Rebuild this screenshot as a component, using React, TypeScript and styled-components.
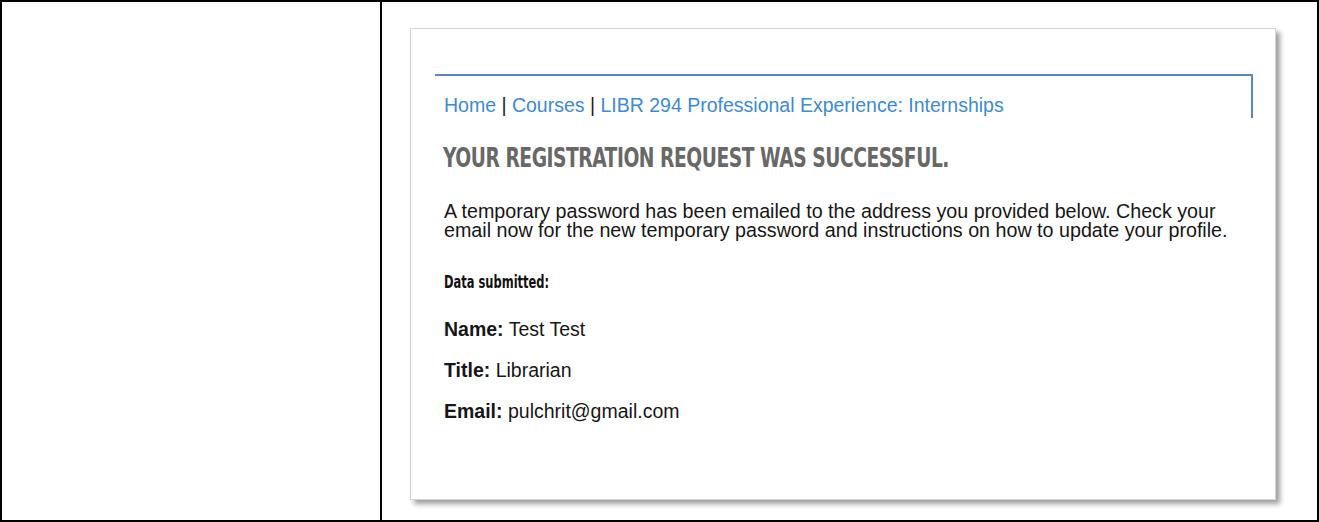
import React from 'react';
import styled, { createGlobalStyle } from 'styled-components';

const Global = createGlobalStyle`
  html, body {
    margin: 0;
    padding: 0;
    background: #fff;
  }
  body {
    font-family: "Liberation Sans", Arial, Helvetica, sans-serif;
  }
`;

const Table = styled.div`
  box-sizing: border-box;
  width: 1319px;
  height: 522px;
  border: 2px solid #000;
  display: grid;
  grid-template-columns: 380px 1fr;
`;

const SideCell = styled.div`
  box-sizing: border-box;
  border-right: 2px solid #000;
`;

const ShotCell = styled.div`
  padding: 26px 0 0 28px;
`;

const Panel = styled.div`
  box-sizing: border-box;
  width: 866px;
  height: 472px;
  border: 1px solid #d4d4d4;
  background: #fff;
  box-shadow: 4px 4px 5px rgba(0, 0, 0, 0.38);
  padding: 45px 22px 0 24px;
`;

const NavBox = styled.div`
  border-top: 2px solid #5a84bf;
  border-right: 2px solid #5a84bf;
  padding: 18px 9px 2px;
`;

const Crumbs = styled.div`
  font-size: 19.5px;
  line-height: 22px;
  color: #1a1a1a;
`;

const Crumb = styled.a`
  color: #3b8ad6;
  text-decoration: none;
`;

const Body = styled.div`
  padding: 0 9px;
  color: #161616;
`;

const Condensed = styled.span<{ $squeeze: number }>`
  display: inline-block;
  white-space: nowrap;
  transform-origin: left center;
  transform: scaleX(${p => p.$squeeze});
`;

const Heading = styled.h1`
  margin: 25px 0 0 -1px;
  font-family: "Liberation Sans Narrow", "DejaVu Sans Condensed", "Liberation Sans", sans-serif;
  font-weight: 700;
  font-size: 26px;
  line-height: 30px;
  letter-spacing: -0.6px;
  color: #686868;
`;

const Para = styled.p`
  margin: 29px 0 0;
  font-size: 19.7px;
  line-height: 19px;
`;

const SubHead = styled.h2`
  margin: 32px 0 0;
  font-family: "Liberation Sans Narrow", "DejaVu Sans Condensed", "Liberation Sans", sans-serif;
  font-weight: 700;
  font-size: 17px;
  line-height: 20px;
  color: #111;
`;

const Fields = styled.div`
  margin-top: 26px;
  display: flex;
  flex-direction: column;
  gap: 19px;
`;

const Field = styled.div`
  font-size: 19.5px;
  line-height: 22px;

  b {
    font-weight: 700;
  }
`;

const submitted = [
  { label: 'Name:', value: 'Test Test' },
  { label: 'Title:', value: 'Librarian' },
  { label: 'Email:', value: 'pulchrit@gmail.com' },
];

export default function App() {
  return (
    <>
      <Global />
      <Table>
        <SideCell />
        <ShotCell>
          <Panel>
            <NavBox>
              <Crumbs>
                <Crumb href="#">Home</Crumb> | <Crumb href="#">Courses</Crumb> |{' '}
                <Crumb href="#">LIBR 294 Professional Experience: Internships</Crumb>
              </Crumbs>
            </NavBox>
            <Body>
              <Heading>
                <Condensed $squeeze={0.8}>YOUR REGISTRATION REQUEST WAS SUCCESSFUL.</Condensed>
              </Heading>
              <Para>
                A temporary password has been emailed to the address you provided below. Check your
                email now for the new temporary password and instructions on how to update your profile.
              </Para>
              <SubHead>
                <Condensed $squeeze={0.75}>Data submitted:</Condensed>
              </SubHead>
              <Fields>
                {submitted.map(f => (
                  <Field key={f.label}>
                    <b>{f.label}</b> {f.value}
                  </Field>
                ))}
              </Fields>
            </Body>
          </Panel>
        </ShotCell>
      </Table>
    </>
  );
}
